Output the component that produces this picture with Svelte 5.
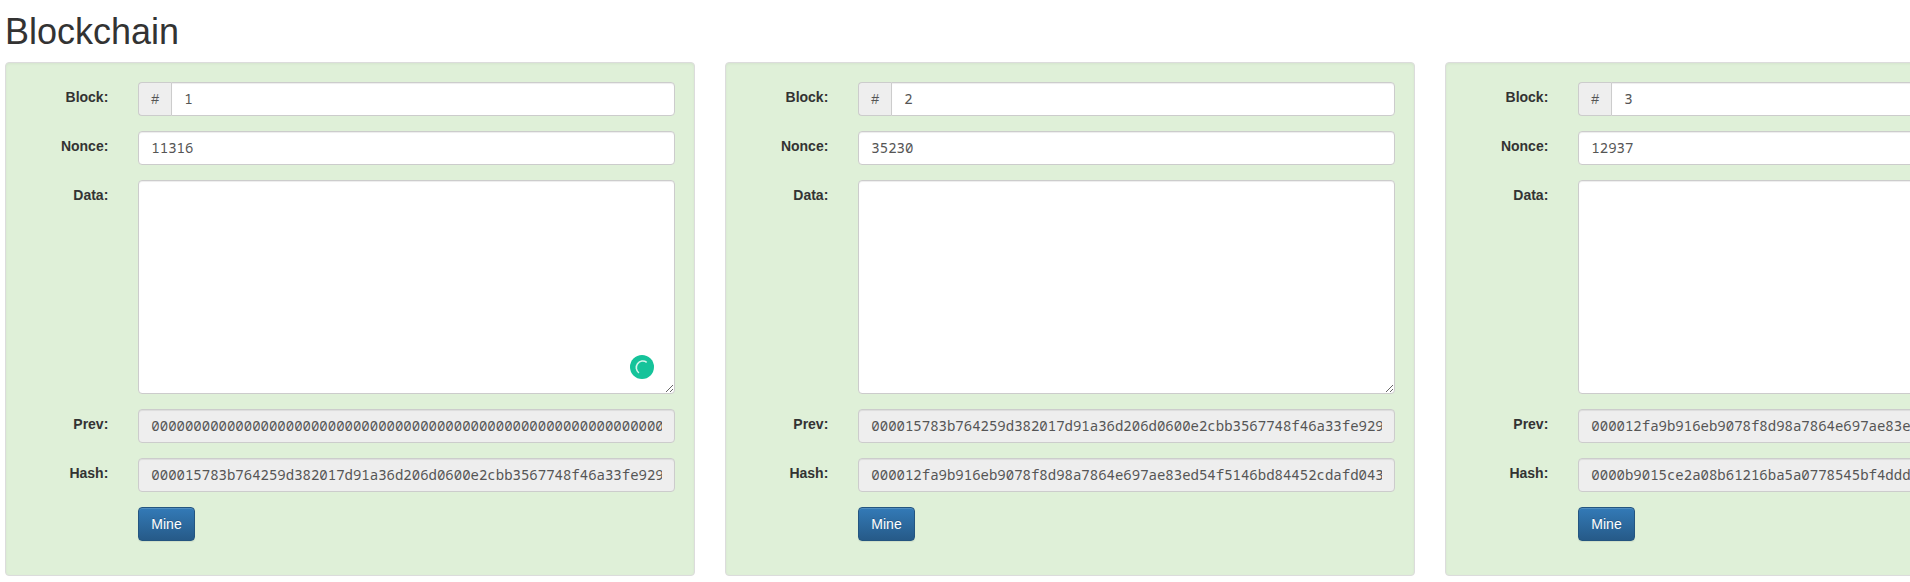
<script>
  const blocks = [
    {
      number: '1',
      nonce: '11316',
      prev: '0000000000000000000000000000000000000000000000000000000000000000',
      hash: '000015783b764259d382017d91a36d206d0600e2cbb3567748f46a33fe9297cf',
      checking: true
    },
    {
      number: '2',
      nonce: '35230',
      prev: '000015783b764259d382017d91a36d206d0600e2cbb3567748f46a33fe9297cf',
      hash: '000012fa9b916eb9078f8d98a7864e697ae83ed54f5146bd84452cdafd043c19'
    },
    {
      number: '3',
      nonce: '12937',
      prev: '000012fa9b916eb9078f8d98a7864e697ae83ed54f5146bd84452cdafd043c19',
      hash: '0000b9015ce2a08b61216ba5a0778545bf4ddd'
    }
  ];
</script>

<main>
  <h1>Blockchain</h1>
  <div class="chain">
    {#each blocks as block}
      <form class="well">
        <div class="row">
          <label for="number{block.number}">Block:</label>
          <div class="field group">
            <span class="addon">#</span>
            <input id="number{block.number}" value={block.number} />
          </div>
        </div>
        <div class="row">
          <label for="nonce{block.number}">Nonce:</label>
          <div class="field"><input id="nonce{block.number}" value={block.nonce} /></div>
        </div>
        <div class="row">
          <label for="data{block.number}">Data:</label>
          <div class="field">
            <textarea id="data{block.number}" rows="10" spellcheck="false"></textarea>
            {#if block.checking}
              <svg class="spinner" viewBox="0 0 24 24" width="24" height="24" aria-hidden="true">
                <circle cx="12" cy="12" r="12" fill="#15c39a" />
                <path d="M16.7 7.3A6.5 6.5 0 0 0 8.9 17.8" fill="none" stroke="#d5f5ec" stroke-width="1.6" />
              </svg>
            {/if}
          </div>
        </div>
        <div class="row">
          <label for="prev{block.number}">Prev:</label>
          <div class="field"><input id="prev{block.number}" value={block.prev} disabled /></div>
        </div>
        <div class="row">
          <label for="hash{block.number}">Hash:</label>
          <div class="field"><input id="hash{block.number}" value={block.hash} disabled /></div>
        </div>
        <div class="row">
          <span></span>
          <div class="field"><button type="button">Mine</button></div>
        </div>
      </form>
    {/each}
  </div>
</main>

<style>
  :global(body) {
    margin: 0;
    background: #fff;
    overflow: hidden;
  }
  main, main * {
    box-sizing: border-box;
  }
  main {
    height: 582px;
    padding: 12.4px 0 0 5px;
    overflow: hidden;
    color: #333;
    font: 14px/20px "Liberation Sans", Arial, sans-serif;
  }
  h1 {
    margin: 0 0 10px;
    font-size: 36px;
    font-weight: 500;
    line-height: 39.6px;
  }
  .chain {
    display: flex;
    gap: 30px;
  }
  .well {
    flex: 0 0 690px;
    height: 514px;
    padding: 19px;
    background: #dff0d8;
    border: 1px solid #dcdcdc;
    border-radius: 4px;
    box-shadow: inset 0 1px 3px rgba(0, 0, 0, 0.05);
  }
  .row {
    display: grid;
    grid-template-columns: 83.33px 536.67px;
    column-gap: 30px;
    margin-bottom: 15px;
  }
  label {
    padding-top: 5px;
    text-align: right;
    font-weight: 700;
  }
  .field {
    position: relative;
    display: flex;
  }
  input, textarea, .addon {
    font: 14px/20px "Noto Sans Mono", "DejaVu Sans Mono", monospace;
    color: #555;
    border: 1px solid #ccc;
    border-radius: 4px;
    padding: 6px 12px;
    margin: 0;
  }
  input, textarea {
    display: block;
    width: 100%;
    min-width: 0;
    background: #fff;
    box-shadow: inset 0 1px 1px rgba(0, 0, 0, 0.075);
  }
  input {
    height: 34px;
  }
  input:disabled {
    background: #eee;
  }
  textarea {
    height: 214px;
    resize: vertical;
  }
  .addon {
    font-family: "Liberation Sans", Arial, sans-serif;
    background: #eee;
    border-right: 0;
    border-radius: 4px 0 0 4px;
  }
  .group input {
    flex: 1;
    border-radius: 0 4px 4px 0;
  }
  .spinner {
    position: absolute;
    right: 21px;
    bottom: 15px;
  }
  button {
    height: 34px;
    padding: 6px 12px;
    border: 1px solid #245580;
    border-radius: 4px;
    background: linear-gradient(to bottom, #337ab7 0%, #265a88 100%);
    box-shadow: inset 0 1px 0 rgba(255, 255, 255, 0.15), 0 1px 1px rgba(0, 0, 0, 0.075);
    color: #fff;
    font: 14px/20px "Liberation Sans", Arial, sans-serif;
    text-shadow: 0 -1px 0 rgba(0, 0, 0, 0.2);
  }
</style>
